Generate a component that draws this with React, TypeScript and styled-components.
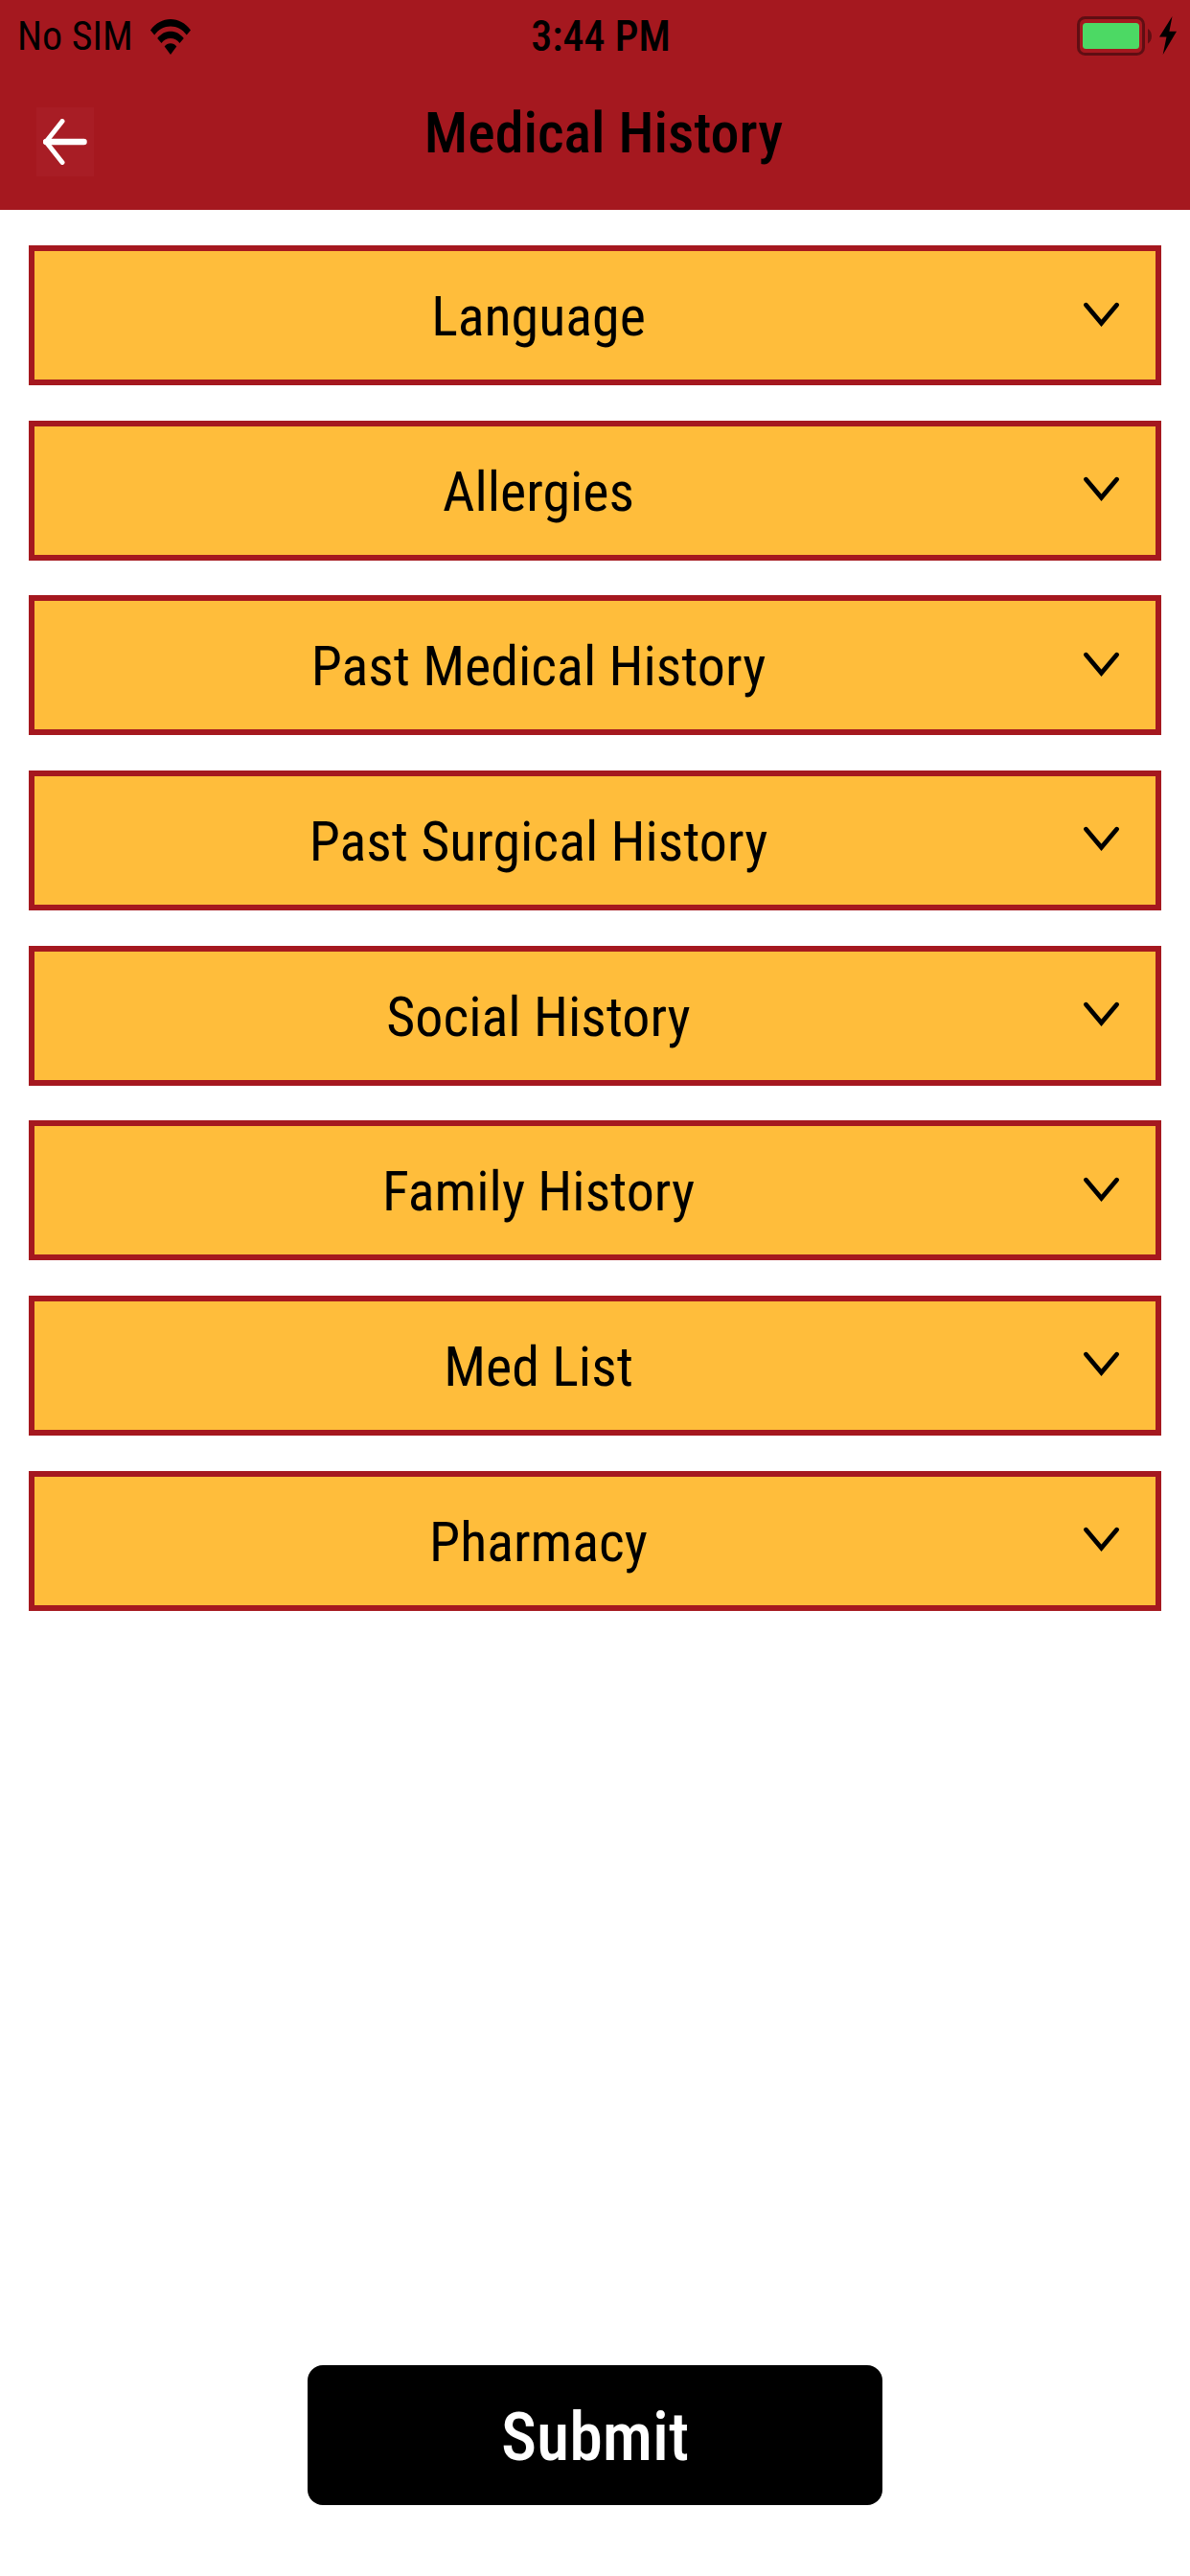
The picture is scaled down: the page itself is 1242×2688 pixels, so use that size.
import React, { useState } from "react";
import styled, { createGlobalStyle } from "styled-components";

const colors = {
  crimson: "#a5181f",
  crimsonLight: "#a81d25",
  amber: "#ffbd3b",
  black: "#000000",
  white: "#ffffff",
  charge: "#4cd964",
};

const GlobalStyle = createGlobalStyle`
  *, *::before, *::after {
    box-sizing: border-box;
  }
  body {
    margin: 0;
    background: ${colors.white};
    color: ${colors.black};
    font-family: "Roboto Condensed", Roboto, "Liberation Sans", sans-serif;
  }
  button {
    font-family: inherit;
    color: inherit;
    cursor: pointer;
  }
`;

const Screen = styled.div`
  display: flex;
  flex-direction: column;
  min-height: 100vh;
`;

const Header = styled.header`
  background: ${colors.crimson};
`;

const StatusBar = styled.div`
  display: grid;
  grid-template-columns: 1fr auto 1fr;
  align-items: center;
  height: 76px;
  padding: 0 14px 0 18px;
  font-size: 42px;
  line-height: 76px;
`;

const Carrier = styled.div`
  display: flex;
  align-items: center;
  gap: 18px;
`;

const Clock = styled.time`
  padding-left: 8px;
  font-size: 44px;
  font-weight: 500;
`;

const Power = styled.div`
  display: flex;
  justify-content: flex-end;
  align-items: center;
  gap: 8px;
  padding-bottom: 2px;
`;

const NavBar = styled.div`
  display: flex;
  align-items: flex-start;
  padding: 0 80px 18px 38px;
`;

const BackButton = styled.button`
  display: flex;
  align-items: center;
  justify-content: center;
  width: 60px;
  height: 72px;
  margin-top: 36px;
  padding: 0;
  border: 0;
  background: ${colors.crimsonLight};
`;

const Title = styled.h1`
  flex: 1;
  margin: 0;
  font-size: 60px;
  font-weight: 500;
  line-height: 125px;
  text-align: center;
`;

const Main = styled.main`
  display: flex;
  flex: 1;
  flex-direction: column;
  padding: 37px 30px 74px;
`;

const SectionList = styled.ul`
  display: flex;
  flex-direction: column;
  justify-content: space-between;
  gap: 16px;
  min-height: 53vh;
  margin: 0;
  padding: 0;
  list-style: none;
`;

const SectionButton = styled.button`
  display: grid;
  grid-template-columns: 1fr 118px;
  align-items: center;
  width: 100%;
  height: 146px;
  padding: 2px 0 0;
  border: 6px solid ${colors.crimson};
  background: ${colors.amber};
  font-size: 58px;
  line-height: 132px;
  text-align: center;
`;

const ChevronSlot = styled.span<{ $open: boolean }>`
  display: flex;
  justify-content: center;
  padding: 0 0 4px 4px;
  transform: ${({ $open }) => ($open ? "scaleY(-1)" : "none")};
`;

const SubmitButton = styled.button`
  width: 600px;
  max-width: 100%;
  height: 146px;
  margin: auto auto 0;
  padding: 4px 0 0;
  border: 0;
  border-radius: 16px;
  background: ${colors.black};
  color: ${colors.white};
  font-size: 70px;
  font-weight: 500;
  line-height: 142px;
`;

const WifiIcon = () => (
  <svg width="42" height="37" viewBox="0 0 42 37" aria-hidden="true">
    <path d="M0 11.5C5.500 4 13 0 21 0s15.500 4 21 11.500l-4.200 5C33.500 10.500 27.500 7.500 21 7.500S8.500 10.500 4.200 16.500z" />
    <path d="M7.200 20C10.800 15.200 15.600 12.700 21 12.700s10.200 2.500 13.800 7.300l-4.300 5c-2.500-3.300-5.700-5-9.500-5s-7 1.700-9.500 5z" />
    <path d="M14.700 28.500c1.700-2.200 3.800-3.300 6.300-3.300s4.600 1.100 6.300 3.300L21 37z" />
  </svg>
);

const BatteryIcon = () => (
  <svg width="78" height="41" viewBox="0 0 78 41" role="img" aria-label="Battery full">
    <rect x="1.500" y="1.500" width="68" height="38" rx="7" fill="none" stroke="#5f0e13" strokeWidth="3" />
    <rect x="6" y="7" width="59" height="27" rx="3.500" fill={colors.charge} />
    <path d="M74 13c5.300 3 5.300 12.500 0 15.500z" fill="#5f0e13" />
  </svg>
);

const BoltIcon = () => (
  <svg width="18" height="40" viewBox="0 0 18 40" role="img" aria-label="Charging">
    <path d="M13.500 0L0 21.500h7.500L3.700 40 18 15.700h-7.600z" />
  </svg>
);

const BackIcon = () => (
  <svg width="46" height="48" viewBox="0 0 46 48" aria-hidden="true">
    <path
      d="M20 2.500L3 24l17 21.500M3.500 24H42.500"
      fill="none"
      stroke={colors.white}
      strokeWidth="5"
      strokeLinecap="round"
      strokeLinejoin="round"
    />
    <path d="M3 24h39.500" stroke={colors.white} strokeWidth="6.500" strokeLinecap="round" />
  </svg>
);

const ChevronIcon = () => (
  <svg width="37" height="27" viewBox="0 0 37 27" aria-hidden="true">
    <path
      d="M2.500 3.200L18.500 22.200 34.500 3.200"
      fill="none"
      stroke={colors.black}
      strokeWidth="4.800"
      strokeLinecap="round"
      strokeLinejoin="miter"
    />
  </svg>
);

const sections = [
  "Language",
  "Allergies",
  "Past Medical History",
  "Past Surgical History",
  "Social History",
  "Family History",
  "Med List",
  "Pharmacy",
];

export default function App() {
  const [selected, setSelected] = useState<string | null>(null);

  return (
    <>
      <GlobalStyle />
      <Screen>
        <Header>
          <StatusBar>
            <Carrier>
              <span>No SIM</span>
              <WifiIcon />
            </Carrier>
            <Clock>3:44 PM</Clock>
            <Power>
              <BatteryIcon />
              <BoltIcon />
            </Power>
          </StatusBar>
          <NavBar>
            <BackButton type="button" aria-label="Back">
              <BackIcon />
            </BackButton>
            <Title>Medical History</Title>
          </NavBar>
        </Header>
        <Main>
          <SectionList>
            {sections.map((name) => (
              <li key={name}>
                <SectionButton
                  type="button"
                  aria-expanded={selected === name}
                  onClick={() => setSelected(selected === name ? null : name)}
                >
                  <span>{name}</span>
                  <ChevronSlot $open={selected === name}>
                    <ChevronIcon />
                  </ChevronSlot>
                </SectionButton>
              </li>
            ))}
          </SectionList>
          <SubmitButton type="button">Submit</SubmitButton>
        </Main>
      </Screen>
    </>
  );
}
